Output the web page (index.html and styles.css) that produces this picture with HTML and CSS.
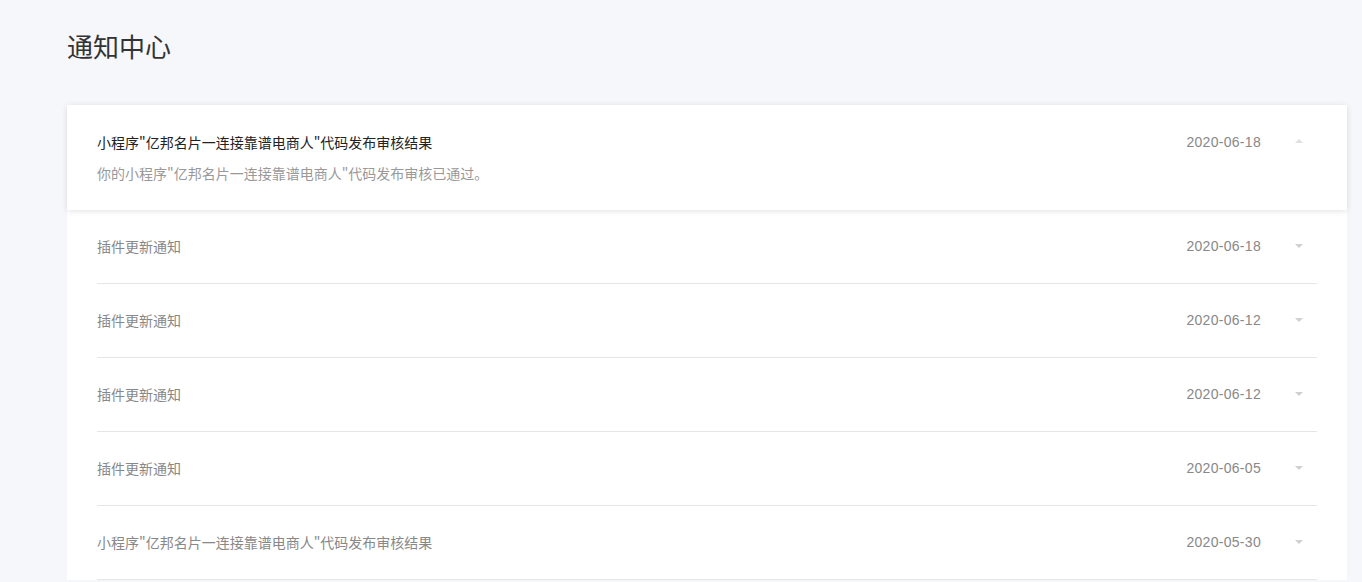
FILE: index.html
```html
<!DOCTYPE html>
<html lang="zh-CN">
<head>
<meta charset="utf-8">
<title>通知中心</title>
<link rel="stylesheet" href="styles.css">
</head>
<body>
<div class="page">
  <h1 class="page-title">通知中心</h1>
  <div class="list">
    <div class="item expanded">
      <div class="item-inner">
        <div class="item-main">
          <div class="item-title">小程序"亿邦名片一连接靠谱电商人"代码发布审核结果</div>
          <div class="item-desc">你的小程序"亿邦名片一连接靠谱电商人"代码发布审核已通过。</div>
        </div>
        <div class="item-date">2020-06-18</div>
        <span class="caret up"></span>
      </div>
    </div>
    <div class="item">
      <div class="item-inner">
        <div class="item-main"><div class="item-title muted">插件更新通知</div></div>
        <div class="item-date">2020-06-18</div>
        <span class="caret"></span>
      </div>
    </div>
    <div class="item">
      <div class="item-inner">
        <div class="item-main"><div class="item-title muted">插件更新通知</div></div>
        <div class="item-date">2020-06-12</div>
        <span class="caret"></span>
      </div>
    </div>
    <div class="item">
      <div class="item-inner">
        <div class="item-main"><div class="item-title muted">插件更新通知</div></div>
        <div class="item-date">2020-06-12</div>
        <span class="caret"></span>
      </div>
    </div>
    <div class="item">
      <div class="item-inner">
        <div class="item-main"><div class="item-title muted">插件更新通知</div></div>
        <div class="item-date">2020-06-05</div>
        <span class="caret"></span>
      </div>
    </div>
    <div class="item">
      <div class="item-inner">
        <div class="item-main"><div class="item-title muted">小程序"亿邦名片一连接靠谱电商人"代码发布审核结果</div></div>
        <div class="item-date">2020-05-30</div>
        <span class="caret"></span>
      </div>
    </div>
  </div>
</div>
</body>
</html>
```
FILE: styles.css
```css
html, body {
  margin: 0;
  padding: 0;
}
body {
  background: #f6f7fb;
  font-family: "Noto Sans CJK SC", "Noto Sans", sans-serif;
  color: #333;
  overflow: hidden;
}
.page {
  padding: 28px 15px 0 67px;
}
.page-title {
  margin: 0;
  font-size: 26px;
  font-weight: 400;
  line-height: 36px;
  color: #333;
}
.list {
  margin-top: 41px;
  background: #fff;
}
.item {
  padding: 0 30px;
  background: #fff;
}
.item.expanded {
  position: relative;
  box-shadow: 0 1px 6px rgba(0, 0, 0, 0.12);
}
.item-inner {
  display: flex;
  align-items: flex-start;
  padding: 26px 0 27px;
  border-bottom: 1px solid #e6e6e6;
}
.item.expanded .item-inner {
  border-bottom: none;
  padding: 27px 0 27px;
}
.item-main {
  flex: 1;
}
.item-title {
  font-size: 14px;
  line-height: 20px;
  color: #222;
}
.item-title.muted {
  color: #888;
}
.item-desc {
  margin-top: 11px;
  font-size: 14px;
  line-height: 20px;
  color: #999;
}
.item-date {
  font-family: "Liberation Sans", Arial, sans-serif;
  font-size: 14px;
  letter-spacing: 0.3px;
  line-height: 20px;
  color: #888;
}
.caret {
  width: 0;
  height: 0;
  margin: 8px 14px 0 34px;
  border-left: 4px solid transparent;
  border-right: 4px solid transparent;
  border-top: 4px solid #d0d0d0;
}
.caret.up {
  margin-top: 7px;
  border-top: none;
  border-bottom: 4px solid #e0e0e0;
}
```
